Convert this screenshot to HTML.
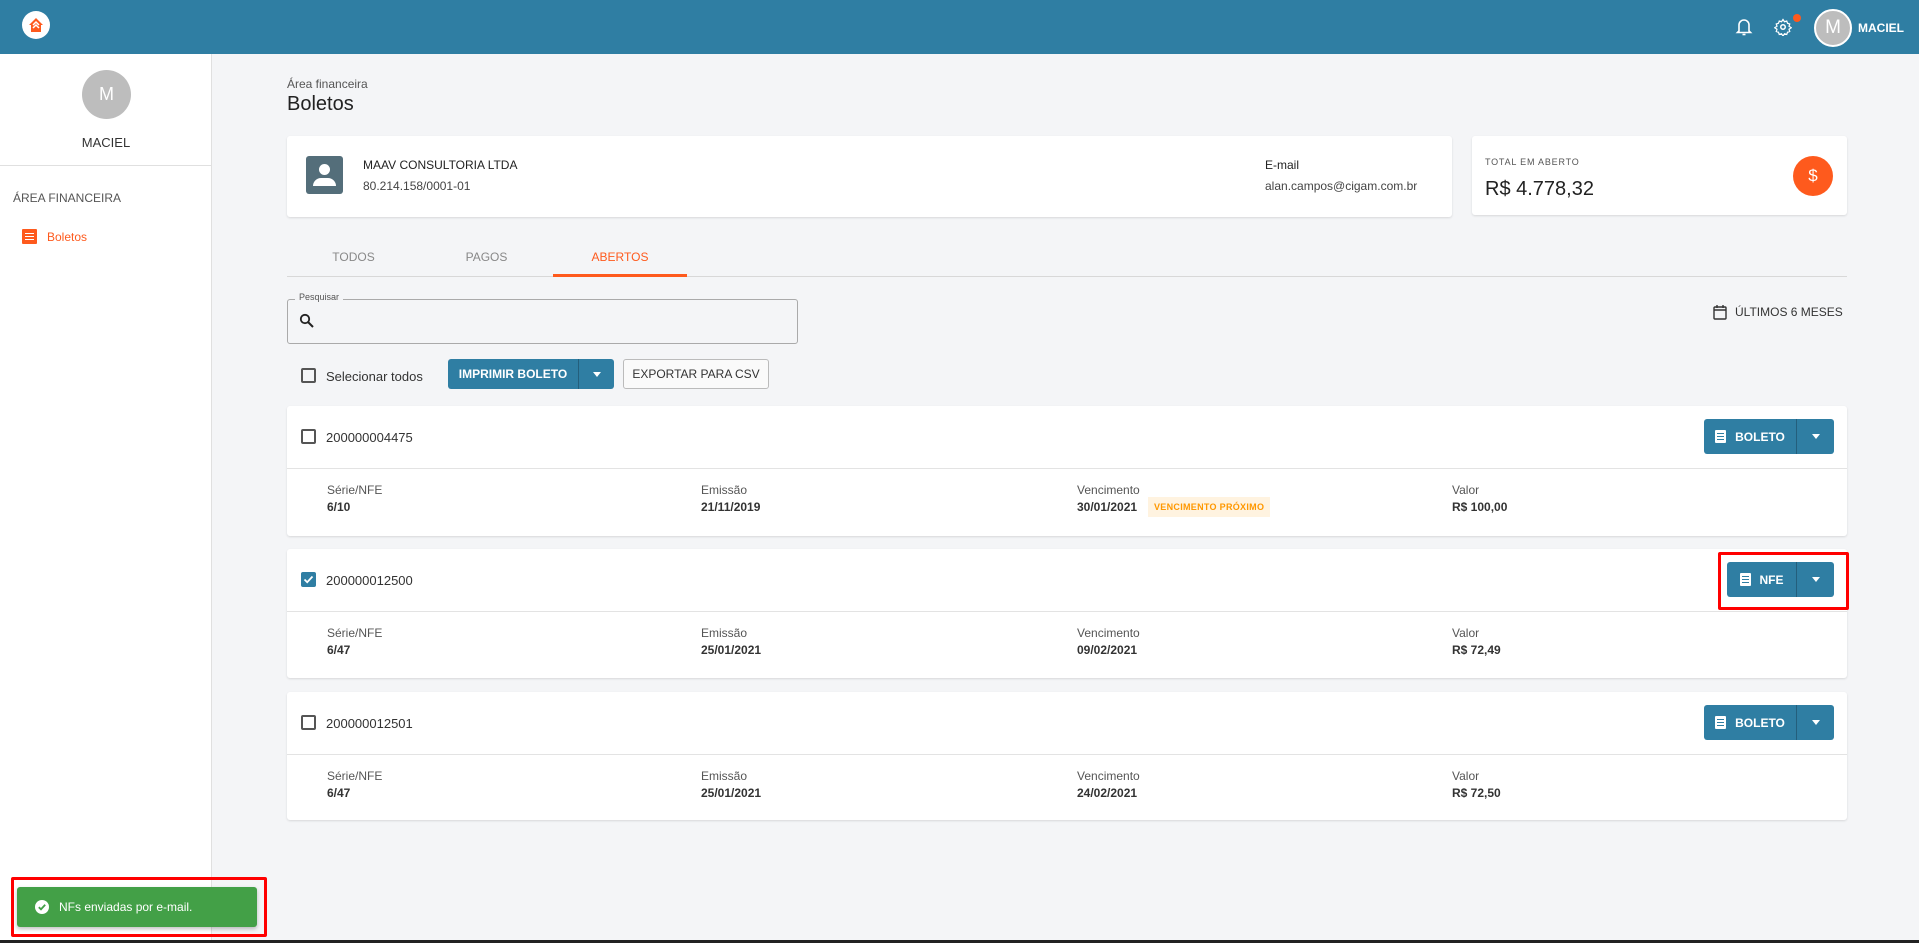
<!DOCTYPE html>
<html><head><meta charset="utf-8"><style>
*{box-sizing:border-box;margin:0;padding:0}
body{width:1919px;height:943px;overflow:hidden;background:#f4f5f7;font-family:"Liberation Sans",sans-serif;color:#222;position:relative}
.abs{position:absolute}
.hdr{left:0;top:0;width:1919px;height:54px;background:#2f7ea3}
.side{left:0;top:54px;width:212px;height:889px;background:#fff;border-right:1px solid #e0e0e0}
.card{background:#fff;border-radius:3px;box-shadow:0 1px 2px rgba(0,0,0,.12)}
.lbl{font-size:12px;color:#555}
.val{font-size:12px;font-weight:bold;color:#333}
.btn{background:#2f7ea3;color:#fff;border-radius:3px;font-size:12px;font-weight:bold;display:flex;align-items:center}
.cb{width:15px;height:15px;border:2px solid #555;border-radius:2px}
.doc{display:inline-block;width:11px;height:13px;background:#fff;border-radius:1px;position:relative;margin-right:9px}
.doc:after{content:"";position:absolute;left:2px;right:2px;top:3px;height:7px;background:repeating-linear-gradient(#2f7ea3 0 1px,#fff 1px 3px)}
.caret{width:0;height:0;border-left:4px solid transparent;border-right:4px solid transparent;border-top:5px solid #fff}
</style></head><body>
<div class="abs hdr"></div>
<div class="abs" style="left:22px;top:11px;width:28px;height:28px;border-radius:50%;background:#fff;display:flex;align-items:center;justify-content:center">
<svg width="18" height="18" viewBox="0 0 18 18"><path d="M9 2 L2 9 L4 9 L4 16 L14 16 L14 9 L16 9 Z" fill="#fe5a1d"/><path d="M6 9 L9 6 L12 9 M6 12 L9 9 L12 12" stroke="#fff" stroke-width="1.5" fill="none"/></svg></div>
<svg class="abs" style="left:1735px;top:17px" width="18" height="20" viewBox="0 0 18 20"><path d="M4 14 V8 a5 5 0 0 1 10 0 V14 L15.5 15.5 H2.5 Z" fill="none" stroke="#fff" stroke-width="1.6"/><path d="M7.5 17.5 h3" stroke="#fff" stroke-width="1.6"/></svg>
<svg class="abs" style="left:1774px;top:18px" width="18" height="18" viewBox="0 0 24 24"><circle cx="12" cy="12" r="3" fill="none" stroke="#fff" stroke-width="2"/><path d="M12 2 l2 3 3-1 1 3 3 1-1 3 3 2-3 2 1 3-3 1-1 3-3-1-2 3-2-3-3 1-1-3-3-1 1-3-3-2 3-2-1-3 3-1 1-3 3 1z" fill="none" stroke="#fff" stroke-width="1.6"/></svg>
<div class="abs" style="left:1793px;top:14px;width:8px;height:8px;border-radius:50%;background:#fe5a1d"></div>
<div class="abs" style="left:1814px;top:9px;width:38px;height:38px;border-radius:50%;background:#bdbdbd;border:2px solid #fff;color:#fff;font-size:19px;display:flex;align-items:center;justify-content:center">M</div>
<div class="abs" style="left:1858px;top:21px;color:#fff;font-weight:bold;font-size:12px">MACIEL</div>

<div class="abs side"></div>
<div class="abs" style="left:82px;top:70px;width:49px;height:49px;border-radius:50%;background:#bdbdbd;color:#fff;font-size:18px;display:flex;align-items:center;justify-content:center">M</div>
<div class="abs" style="left:0;width:212px;top:135px;text-align:center;font-size:13px;color:#333">MACIEL</div>
<div class="abs" style="left:0;top:165px;width:212px;height:1px;background:#e0e0e0"></div>
<div class="abs" style="left:13px;top:191px;font-size:12px;color:#555">ÁREA FINANCEIRA</div>
<div class="abs" style="left:22px;top:229px;width:15px;height:15px;background:#fe5a1d;border-radius:1px"><div style="position:absolute;left:3px;right:3px;top:4px;height:7px;background:repeating-linear-gradient(#fff 0 1px,#fe5a1d 1px 3px)"></div></div>
<div class="abs" style="left:47px;top:230px;font-size:12px;color:#fe5a1d">Boletos</div>

<div class="abs" style="left:287px;top:77px;font-size:12px;color:#555">Área financeira</div>
<div class="abs" style="left:287px;top:93px;font-size:20px;color:#222">Boletos</div>

<div class="abs card" style="left:287px;top:136px;width:1165px;height:81px"></div>
<div class="abs" style="left:306px;top:156px;width:37px;height:38px;background:#546e7a;border-radius:3px"><div style="position:absolute;left:13px;top:8px;width:11px;height:11px;border-radius:50%;background:#fff"></div><div style="position:absolute;left:7px;top:22px;width:23px;height:8px;border-radius:8px 8px 0 0;background:#fff"></div></div>
<div class="abs" style="left:363px;top:158px;font-size:12px;color:#222">MAAV CONSULTORIA LTDA</div>
<div class="abs" style="left:363px;top:179px;font-size:12px;color:#444">80.214.158/0001-01</div>
<div class="abs" style="left:1265px;top:158px;font-size:12px;color:#222">E-mail</div>
<div class="abs" style="left:1265px;top:179px;font-size:12px;color:#444">alan.campos@cigam.com.br</div>

<div class="abs card" style="left:1472px;top:136px;width:375px;height:79px"></div>
<div class="abs" style="left:1485px;top:157px;font-size:9px;letter-spacing:.8px;color:#555">TOTAL EM ABERTO</div>
<div class="abs" style="left:1485px;top:178px;font-size:20px;color:#222">R$ 4.778,32</div>
<div class="abs" style="left:1793px;top:156px;width:40px;height:40px;border-radius:50%;background:#fe5a1d;color:#fff;font-size:17px;display:flex;align-items:center;justify-content:center">$</div>

<div class="abs" style="left:287px;top:276px;width:1560px;height:1px;background:#d8d8d8"></div>
<div class="abs" style="left:287px;width:133px;top:250px;text-align:center;font-size:12px;color:#888">TODOS</div>
<div class="abs" style="left:420px;width:133px;top:250px;text-align:center;font-size:12px;color:#888">PAGOS</div>
<div class="abs" style="left:553px;width:134px;top:250px;text-align:center;font-size:12px;color:#fe5a1d">ABERTOS</div>
<div class="abs" style="left:553px;top:274px;width:134px;height:3px;background:#fe5a1d"></div>

<div class="abs" style="left:287px;top:299px;width:511px;height:45px;border:1px solid #aaa;border-radius:3px"></div>
<div class="abs" style="left:295px;top:292px;padding:0 4px;background:#f4f5f7;font-size:9px;color:#555">Pesquisar</div>
<svg class="abs" style="left:299px;top:313px" width="16" height="16" viewBox="0 0 16 16"><circle cx="6" cy="6" r="4.2" fill="none" stroke="#222" stroke-width="1.8"/><path d="M9 9 L14 14" stroke="#222" stroke-width="2"/></svg>
<svg class="abs" style="left:1713px;top:304px" width="14" height="16" viewBox="0 0 14 16"><rect x="1" y="3" width="12" height="12" rx="1" fill="none" stroke="#333" stroke-width="1.4"/><path d="M1 6 H13 M4 1 V4 M10 1 V4" stroke="#333" stroke-width="1.4"/></svg>
<div class="abs" style="left:1735px;top:305px;font-size:12px;color:#333">ÚLTIMOS 6 MESES</div>

<div class="abs cb" style="left:301px;top:368px"></div>
<div class="abs" style="left:326px;top:369px;font-size:13px;color:#333">Selecionar todos</div>
<div class="abs btn" style="left:448px;top:359px;width:166px;height:30px"><span style="width:130px;text-align:center">IMPRIMIR BOLETO</span><span style="width:1px;height:30px;background:#245f7c"></span><span style="flex:1;display:flex;justify-content:center"><span class="caret"></span></span></div>
<div class="abs" style="left:623px;top:359px;width:146px;height:30px;border:1px solid #bbb;border-radius:3px;background:#fafafa;font-size:12px;color:#333;display:flex;align-items:center;justify-content:center">EXPORTAR PARA CSV</div>

<!-- cards -->
<div class="abs card" style="left:287px;top:406px;width:1560px;height:130px"><div style="position:absolute;left:0;right:0;top:62px;height:1px;background:#e3e3e3"></div></div>
<div class="abs cb" style="left:301px;top:429px"></div>
<div class="abs" style="left:326px;top:430px;font-size:13px;color:#333">200000004475</div>
<div class="abs btn" style="left:1704px;top:419px;width:130px;height:35px"><span style="width:92px;display:flex;align-items:center;justify-content:center"><span class="doc"></span>BOLETO</span><span style="width:1px;height:35px;background:#245f7c"></span><span style="flex:1;display:flex;justify-content:center"><span class="caret"></span></span></div>
<div class="abs lbl" style="left:327px;top:483px">Série/NFE</div><div class="abs val" style="left:327px;top:500px">6/10</div>
<div class="abs lbl" style="left:701px;top:483px">Emissão</div><div class="abs val" style="left:701px;top:500px">21/11/2019</div>
<div class="abs lbl" style="left:1077px;top:483px">Vencimento</div><div class="abs val" style="left:1077px;top:500px">30/01/2021</div>
<div class="abs" style="left:1148px;top:497px;height:20px;padding:0 6px;background:#fff3e0;color:#ff9800;font-size:9px;font-weight:bold;letter-spacing:.3px;line-height:20px">VENCIMENTO PRÓXIMO</div>
<div class="abs lbl" style="left:1452px;top:483px">Valor</div><div class="abs val" style="left:1452px;top:500px">R$ 100,00</div>

<div class="abs card" style="left:287px;top:549px;width:1560px;height:129px"><div style="position:absolute;left:0;right:0;top:62px;height:1px;background:#e3e3e3"></div></div>
<div class="abs" style="left:301px;top:572px;width:15px;height:15px;background:#2f7ea3;border-radius:2px"><svg width="15" height="15" viewBox="0 0 15 15"><path d="M3.5 7.5 L6.2 10.2 L11.5 4.5" stroke="#fff" stroke-width="1.8" fill="none"/></svg></div>
<div class="abs" style="left:326px;top:573px;font-size:13px;color:#333">200000012500</div>
<div class="abs" style="left:1718px;top:552px;width:131px;height:58px;border:3px solid #f00;border-radius:2px"></div>
<div class="abs btn" style="left:1727px;top:562px;width:107px;height:35px"><span style="width:69px;display:flex;align-items:center;justify-content:center"><span class="doc"></span>NFE</span><span style="width:1px;height:35px;background:#245f7c"></span><span style="flex:1;display:flex;justify-content:center"><span class="caret"></span></span></div>
<div class="abs lbl" style="left:327px;top:626px">Série/NFE</div><div class="abs val" style="left:327px;top:643px">6/47</div>
<div class="abs lbl" style="left:701px;top:626px">Emissão</div><div class="abs val" style="left:701px;top:643px">25/01/2021</div>
<div class="abs lbl" style="left:1077px;top:626px">Vencimento</div><div class="abs val" style="left:1077px;top:643px">09/02/2021</div>
<div class="abs lbl" style="left:1452px;top:626px">Valor</div><div class="abs val" style="left:1452px;top:643px">R$ 72,49</div>

<div class="abs card" style="left:287px;top:692px;width:1560px;height:128px"><div style="position:absolute;left:0;right:0;top:62px;height:1px;background:#e3e3e3"></div></div>
<div class="abs cb" style="left:301px;top:715px"></div>
<div class="abs" style="left:326px;top:716px;font-size:13px;color:#333">200000012501</div>
<div class="abs btn" style="left:1704px;top:705px;width:130px;height:35px"><span style="width:92px;display:flex;align-items:center;justify-content:center"><span class="doc"></span>BOLETO</span><span style="width:1px;height:35px;background:#245f7c"></span><span style="flex:1;display:flex;justify-content:center"><span class="caret"></span></span></div>
<div class="abs lbl" style="left:327px;top:769px">Série/NFE</div><div class="abs val" style="left:327px;top:786px">6/47</div>
<div class="abs lbl" style="left:701px;top:769px">Emissão</div><div class="abs val" style="left:701px;top:786px">25/01/2021</div>
<div class="abs lbl" style="left:1077px;top:769px">Vencimento</div><div class="abs val" style="left:1077px;top:786px">24/02/2021</div>
<div class="abs lbl" style="left:1452px;top:769px">Valor</div><div class="abs val" style="left:1452px;top:786px">R$ 72,50</div>

<div class="abs" style="left:11px;top:877px;width:256px;height:60px;border:3px solid #f00;border-radius:2px"></div>
<div class="abs" style="left:17px;top:887px;width:240px;height:40px;background:#43a047;border-radius:3px;box-shadow:0 2px 4px rgba(0,0,0,.25);display:flex;align-items:center;color:#fff;font-size:12px">
<svg style="margin:0 10px 0 18px" width="14" height="14" viewBox="0 0 14 14"><circle cx="7" cy="7" r="7" fill="#fff"/><path d="M3.8 7.2 L6 9.3 L10.2 4.8" stroke="#43a047" stroke-width="1.8" fill="none"/></svg>NFs enviadas por e-mail.</div>
<div class="abs" style="left:0;top:940px;width:1919px;height:3px;background:#222"></div>
</body></html>
